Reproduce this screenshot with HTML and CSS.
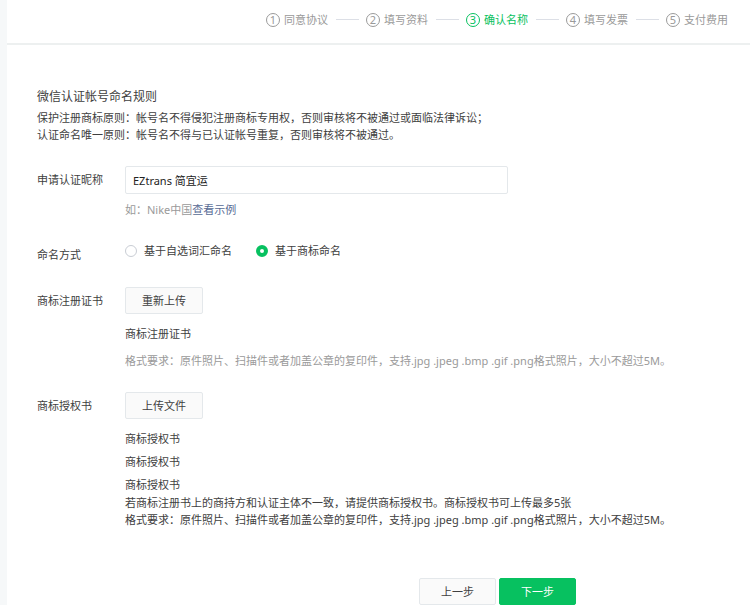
FILE: index.html
```html
<!DOCTYPE html>
<html lang="zh-CN">
<head>
    <meta charset="UTF-8">
    <meta name="viewport" content="width=device-width, initial-scale=1.0">
    <title>微信认证 - 确认名称</title>
    <link rel="stylesheet" href="styles.css">
</head>
<body>
    <div class="page">
        <header class="header">
            <ol class="steps">
                <li class="step"><span class="step-num">1</span>同意协议</li>
                <li class="step"><span class="step-num">2</span>填写资料</li>
                <li class="step active"><span class="step-num">3</span>确认名称</li>
                <li class="step"><span class="step-num">4</span>填写发票</li>
                <li class="step"><span class="step-num">5</span>支付费用</li>
            </ol>
        </header>

        <form class="content">
            <section class="rules">
                <h1>微信认证帐号命名规则</h1>
                <p>保护注册商标原则：帐号名不得侵犯注册商标专用权，否则审核将不被通过或面临法律诉讼；</p>
                <p>认证命名唯一原则：帐号名不得与已认证帐号重复，否则审核将不被通过。</p>
            </section>

            <div class="row">
                <label class="row-label" for="nickname">申请认证昵称</label>
                <div class="row-main">
                    <input class="text-input" type="text" id="nickname" value="EZtrans 简宜运">
                    <p class="example">如：Nike中国<a href="#">查看示例</a></p>
                </div>
            </div>

            <div class="row" role="radiogroup" aria-labelledby="naming-label">
                <span class="row-label" id="naming-label">命名方式</span>
                <div class="row-main radios">
                    <label class="radio"><input type="radio" name="naming">基于自选词汇命名</label>
                    <label class="radio"><input type="radio" name="naming" checked>基于商标命名</label>
                </div>
            </div>

            <div class="row">
                <label class="row-label" for="upload-cert">商标注册证书</label>
                <div class="row-main">
                    <button class="btn" type="button" id="upload-cert">重新上传</button>
                    <p class="file">商标注册证书</p>
                    <p class="format">格式要求：原件照片、扫描件或者加盖公章的复印件，支持.jpg .jpeg .bmp .gif .png格式照片，大小不超过5M。</p>
                </div>
            </div>

            <div class="row">
                <label class="row-label" for="upload-auth">商标授权书</label>
                <div class="row-main">
                    <button class="btn" type="button" id="upload-auth">上传文件</button>
                    <ul class="files">
                        <li>商标授权书</li>
                        <li>商标授权书</li>
                        <li>商标授权书</li>
                    </ul>
                    <p>若商标注册书上的商持方和认证主体不一致，请提供商标授权书。商标授权书可上传最多5张</p>
                    <p>格式要求：原件照片、扫描件或者加盖公章的复印件，支持.jpg .jpeg .bmp .gif .png格式照片，大小不超过5M。</p>
                </div>
            </div>

            <div class="actions">
                <button class="btn" type="button">上一步</button>
                <button class="btn btn-primary" type="submit">下一步</button>
            </div>
        </form>
    </div>
</body>
</html>
```
FILE: styles.css
```css
* {
    box-sizing: border-box;
}

body {
    margin: 0;
    background-color: #f6f8f9;
    color: #404040;
    font-family: "Noto Sans", "Noto Sans CJK SC", sans-serif;
    font-size: 11px;
    line-height: 17px;
}

h1, p, ul, ol {
    margin: 0;
    padding: 0;
}

ul, ol {
    list-style: none;
}

a {
    color: #576b95;
    text-decoration: none;
}

.page {
    margin-left: 7px;
    min-height: 100vh;
    background-color: #fff;
}

/* 步骤条 */
.header {
    padding: 11px 22px 15px;
    border-bottom: 2px solid #edf0f0;
}

.steps {
    display: flex;
    justify-content: flex-end;
}

.step {
    display: flex;
    align-items: center;
    color: #9a9a9a;
    white-space: nowrap;
}

.step:not(:last-child)::after {
    content: "";
    width: 23px;
    height: 1px;
    margin: 0 7px 0 8px;
    background-color: #dcdfe6;
}

.step-num {
    width: 14px;
    height: 14px;
    margin-right: 4px;
    border: 1px solid currentColor;
    border-radius: 50%;
    line-height: 12px;
    text-align: center;
}

.step.active {
    color: #07c160;
}

/* 表单 */
.content {
    padding: 42px 30px 0;
}

.rules h1 {
    margin-bottom: 2px;
    font-size: 12px;
    font-weight: 400;
    line-height: 20px;
}

.row {
    display: flex;
    margin-top: 23px;
}

.row-label {
    flex: none;
    width: 88px;
    padding: 5px 0 1px;
}

.row-main {
    flex: 1;
    min-width: 0;
}

.text-input {
    display: block;
    width: 100%;
    max-width: 383px;
    height: 28px;
    padding: 0 7px;
    border: 1px solid #e4e8eb;
    border-radius: 2px;
    color: #222;
    font: inherit;
}

.example {
    margin-top: 7px;
    color: #9a9a9a;
}

.radios {
    display: flex;
    gap: 24px;
    padding-top: 1px;
}

.radio {
    display: flex;
    align-items: center;
    height: 17px;
}

.radio input {
    appearance: none;
    width: 12px;
    height: 12px;
    margin: 0 7px 0 0;
    border: 1px solid #c9cdd4;
    border-radius: 50%;
    background-color: #fff;
}

.radio input:checked {
    border: 4px solid #07c160;
}

.btn {
    display: block;
    min-width: 77px;
    height: 27px;
    padding: 0 16px;
    border: 1px solid #e4e8eb;
    border-radius: 2px;
    background-color: #fafafa;
    color: #404040;
    font: inherit;
    cursor: pointer;
}

.btn-primary {
    border-color: #07c160;
    background-color: #07c160;
    color: #fff;
}

.file {
    margin-top: 11px;
}

.format {
    margin-top: 10px;
    color: #9a9a9a;
}

.files {
    display: flex;
    flex-direction: column;
    gap: 6px;
    margin: 11px 0 1px;
}

.actions {
    display: flex;
    justify-content: flex-end;
    gap: 3px;
    margin-top: 50px;
    padding-right: 144px;
}
```
